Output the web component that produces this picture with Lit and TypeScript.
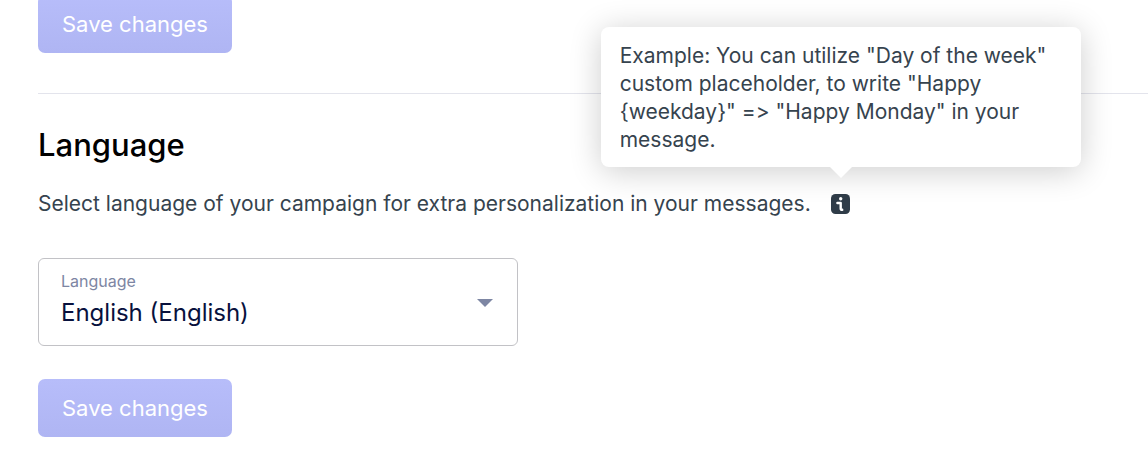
import { LitElement, html, css } from "lit";
import { customElement, property } from "lit/decorators.js";

@customElement("info-tip")
class InfoTip extends LitElement {
  static styles = css`
    :host {
      position: relative;
      display: inline-flex;
    }
    .trigger {
      display: flex;
      padding: 0;
      border: 0;
      background: none;
      cursor: pointer;
    }
    .tip {
      position: absolute;
      left: 50%;
      bottom: calc(100% + 27px);
      transform: translateX(-50%);
      box-sizing: border-box;
      width: 480px;
      padding: 15px 19px 13px;
      border-radius: 8px;
      background: #fff;
      color: #36434e;
      font-size: 21px;
      line-height: 28px;
      font-variant-ligatures: no-contextual;
      white-space: normal;
      box-shadow: 0 4px 32px rgba(0, 0, 0, 0.2);
    }
    .tip::after {
      content: "";
      position: absolute;
      top: 100%;
      left: 50%;
      margin-left: -11px;
      border: 11px solid transparent;
      border-top-color: #fff;
      border-bottom: 0;
    }
  `;

  @property() text = "";

  render() {
    return html`
      <button class="trigger" type="button" aria-label="More information" aria-describedby="tip">
        <svg width="20" height="20" viewBox="0 0 20 20" aria-hidden="true">
          <rect x="0" y="0" width="19" height="20" rx="4.5" fill="#2f3c48" />
          <circle cx="9.7" cy="4.8" r="1.7" fill="#fff" />
          <path d="M6.4 9H9.7V14.4Q9.7 16 11.2 15.8" fill="none" stroke="#fff" stroke-width="2.4" stroke-linecap="round" stroke-linejoin="round" />
        </svg>
      </button>
      <div class="tip" id="tip" role="tooltip">${this.text}</div>
    `;
  }
}

@customElement("app-root")
class AppRoot extends LitElement {
  static styles = css`
    :host {
      display: block;
      overflow: hidden;
      padding-left: 38px;
      background: #fff;
      font-family: Inter, "Liberation Sans", sans-serif;
      color: #36434e;
    }
    .previous {
      margin-top: -5px;
      padding-bottom: 40px;
      border-bottom: 1px solid #e3e4ec;
    }
    .save {
      display: block;
      height: 58px;
      padding: 0 24px;
      border: 0;
      border-radius: 7px;
      background: linear-gradient(#b7bdfa, #afb5f3);
      color: #fff;
      font: inherit;
      font-size: 22px;
    }
    .section {
      padding: 31px 0 37px;
    }
    .title {
      margin: 0;
      color: #000;
      font-size: 31px;
      line-height: 40px;
      font-weight: 500;
    }
    .intro {
      display: flex;
      align-items: center;
      gap: 20px;
      margin: 23px 0 38px;
      font-size: 21px;
      line-height: 32px;
      white-space: nowrap;
    }
    .field {
      display: grid;
      box-sizing: border-box;
      max-width: 480px;
      margin-bottom: 33px;
      border: 1px solid #c2c2c6;
      border-radius: 6px;
    }
    .label {
      grid-area: 1 / 1;
      place-self: start;
      padding: 12px 22px;
      color: #7d86a3;
      font-size: 16px;
      line-height: 20px;
      pointer-events: none;
    }
    .select {
      grid-area: 1 / 1;
      box-sizing: border-box;
      width: 100%;
      height: 86px;
      padding: 38px 56px 16px 22px;
      border: 0;
      border-radius: 6px;
      appearance: none;
      background: none;
      color: #08113d;
      font: inherit;
      font-size: 24px;
      line-height: 32px;
    }
    .arrow {
      grid-area: 1 / 1;
      place-self: center end;
      margin: 2px 24px 0 0;
      pointer-events: none;
    }
  `;

  render() {
    return html`
      <form class="previous">
        <button class="save" type="button">Save changes</button>
      </form>
      <form class="section">
        <h2 class="title">Language</h2>
        <div class="intro">
          <span>Select language of your campaign for extra personalization in your messages.</span>
          <info-tip
            text='Example: You can utilize "Day of the week" custom placeholder, to write "Happy {weekday}" => "Happy Monday" in your message.'
          ></info-tip>
        </div>
        <div class="field">
          <select class="select" id="language">
            <option>English (English)</option>
          </select>
          <label class="label" for="language">Language</label>
          <svg class="arrow" width="16" height="8" viewBox="0 0 16 8" aria-hidden="true">
            <path d="M0 0H16L8 8Z" fill="#7d86a3" />
          </svg>
        </div>
        <button class="save" type="button">Save changes</button>
      </form>
    `;
  }
}
